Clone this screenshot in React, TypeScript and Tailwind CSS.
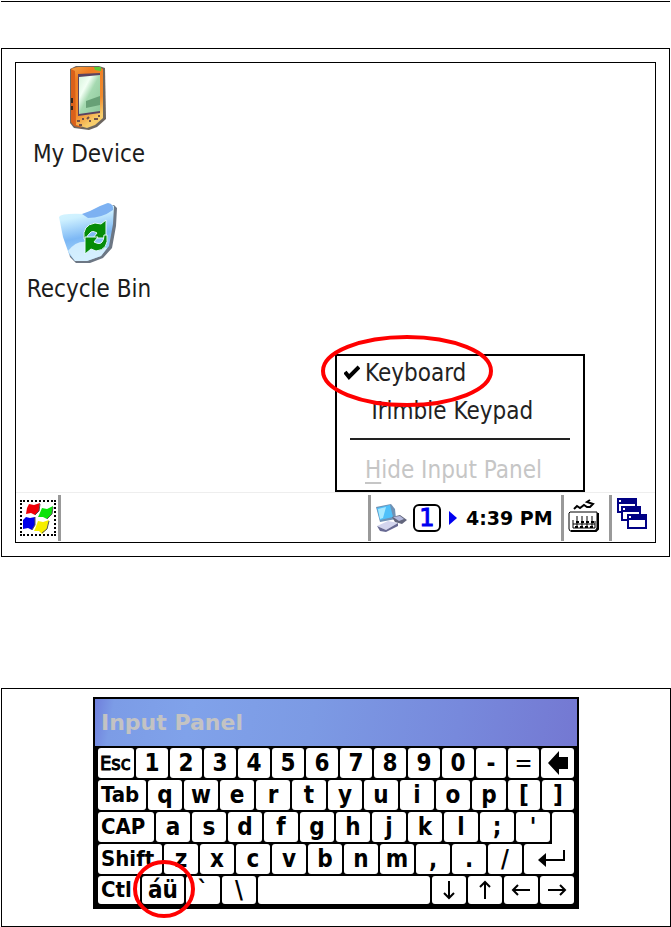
import type { ReactNode } from "react";

type Key = { label: ReactNode; name?: string; w: string; look?: string };

const W34 = "w-[34px]";
const W36 = "w-9";
const WIDE = "justify-start pl-[3px] text-[22px]";

const chars = (s: string, w: string): Key[] => [...s].map((c) => ({ label: c, w }));

function BackArrow() {
  return (
    <svg width="22" height="24" viewBox="0 0 22 24" aria-hidden="true">
      <path d="M1 12 L12 0 V6 H21 V18 H12 V24 Z" fill="#000" />
    </svg>
  );
}

function EnterArrow() {
  return (
    <svg width="28" height="20" viewBox="0 0 28 20" className="ml-1" aria-hidden="true">
      <path d="M27 1 V11 H6" fill="none" stroke="#000" strokeWidth="2" />
      <path d="M1 11 L9 4 V18 Z" fill="#000" />
    </svg>
  );
}

function Arrow({ d }: { d: string }) {
  return (
    <svg width="20" height="20" viewBox="0 0 20 20" aria-hidden="true">
      <path d={d} fill="none" stroke="#000" strokeWidth="2" />
    </svg>
  );
}

const ROWS: Key[][] = [
  [
    { label: "Esc", w: "w-[38px]", look: "justify-start pl-[2px] text-[20px] font-normal [-webkit-text-stroke:1px_#000]" },
    ...chars("1234567890", W34),
    { label: "-", w: "w-8" },
    { label: "=", w: "w-[33px]", look: "justify-center text-[24px] font-normal" },
    { label: <BackArrow />, name: "Backspace", w: "w-[35px]" },
  ],
  [
    { label: "Tab", w: "w-[50px]", look: WIDE },
    ...chars("qwertyuiop", W36),
    { label: "[", w: W34 },
    { label: "]", w: W34 },
  ],
  [{ label: "CAP", w: "w-[58px]", look: WIDE }, ...chars("asdfghjkl;'", W36)],
  [
    { label: "Shift", w: "w-[66px]", look: WIDE },
    ...chars("zxcvbnm,./", W36),
    { label: <EnterArrow />, name: "Enter", w: "w-[52px]" },
  ],
  [
    { label: "Ctl", w: "w-11", look: WIDE },
    { label: "áü", w: "w-11" },
    { label: "`", w: W36 },
    { label: "\\", w: W36 },
    { label: "", name: "Space", w: "w-[174px]" },
    { label: <Arrow d="M10 1 V18 M5 13 L10 18 L15 13" />, name: "Down", w: W36 },
    { label: <Arrow d="M10 19 V2 M5 7 L10 2 L15 7" />, name: "Up", w: W36 },
    { label: <Arrow d="M19 10 H2 M7 5 L2 10 L7 15" />, name: "Left", w: W36 },
    { label: <Arrow d="M1 10 H18 M13 5 L18 10 L13 15" />, name: "Right", w: W36 },
  ],
];

function KeyButton({ k }: { k: Key }) {
  return (
    <div className={`${k.w} shrink-0 p-px`}>
      <button
        type="button"
        aria-label={k.name}
        className={`flex h-full w-full items-center overflow-hidden whitespace-nowrap rounded-[3px] bg-white ${k.look ?? "justify-center text-[24px]"}`}
      >
        {k.label}
      </button>
    </div>
  );
}

function Keyboard() {
  return (
    <div className="border-2 border-black bg-black font-['DejaVu_Sans_Condensed','DejaVu_Sans',sans-serif] leading-6 font-bold text-black">
      <h2 className="flex h-[47px] items-center bg-[linear-gradient(100deg,#6f7fdc_0%,#7c9ce6_4%,#80a2ea_20%,#7c9ae4_45%,#7789dc_75%,#7478d2_100%)] px-[6px] font-['DejaVu_Sans',sans-serif] text-[22px] text-[#c3c3c3]">
        Input Panel
      </h2>
      <div className="px-[2px] pt-px pb-[2px]">
        {ROWS.map((row, i) => (
          <div key={i} className={i === ROWS.length - 1 ? "flex h-[30px]" : "flex h-8"}>
            {row.map((k, j) => (
              <KeyButton key={j} k={k} />
            ))}
            {i === 2 && <span className="z-10 m-px -mb-1 flex-1 rounded-t-[3px] bg-white" />}
          </div>
        ))}
      </div>
    </div>
  );
}

function DeviceIcon() {
  return (
    <svg width="38" height="66" viewBox="0 0 38 66" className="mr-[4px]" aria-hidden="true">
      <defs>
        <linearGradient id="body" x1="0" x2=".4" y1="0" y2="1">
          <stop offset="0" stopColor="#f3a548" />
          <stop offset=".25" stopColor="#ef7c22" />
          <stop offset=".75" stopColor="#f08c2e" />
          <stop offset="1" stopColor="#f8cd6a" />
        </linearGradient>
        <linearGradient id="screen" x1="0" x2="1" y1="0" y2="1">
          <stop offset="0" stopColor="#d5f3da" />
          <stop offset=".3" stopColor="#f2fff4" />
          <stop offset=".5" stopColor="#a5d9b0" />
          <stop offset="1" stopColor="#8cc79a" />
        </linearGradient>
      </defs>
      <path d="M8 1 L31 1 L37 3 L38 54 L29 62 L21 65 L6 63 L2 58 V4 Z" fill="#6c6660" />
      <path d="M3 4 L9 2 V59 L14 63 L6 61 L3 57 Z" fill="#d9601a" />
      <path d="M3 4 L10 2 L31 2 L35 4 V53 L27 60 L19 63 L8 60 L7 6 Z" fill="url(#body)" />
      <path d="M10 9 L32 8 V48 L10 51 Z" fill="#5a4260" />
      <path d="M11 12 L32 10 V46 L11 49 Z" fill="url(#screen)" />
      <path d="M18 36 L32 31 V40 L18 43 Z" fill="#67a076" />
      <path d="M26 2 H33 V6 L27 5 Z" fill="#59c936" />
      <path d="M4 33 V38 M4 41 V45" stroke="#33241c" strokeWidth="2" />
      <path d="M9 56 h3 M14 54 h2 M19 54 l2 -2 M21 56 h2 M26 54 h4 M31 50 v2 M11 60 h3" stroke="#70504a" strokeWidth="2" />
    </svg>
  );
}

function BinIcon() {
  return (
    <svg width="60" height="62" viewBox="0 0 60 62" className="mr-[2px]" aria-hidden="true">
      <defs>
        <linearGradient id="bin" x1="0" x2=".2" y1="0" y2="1">
          <stop offset="0" stopColor="#e0fbff" />
          <stop offset=".3" stopColor="#cdf0ff" />
          <stop offset=".65" stopColor="#7db8f5" />
          <stop offset="1" stopColor="#a8d6fa" />
        </linearGradient>
      </defs>
      <path d="M3 16 L30 14 L48 4 L56 3 L59 6 L58 24 L54 46 L45 56 L32 61 H18 L12 55 Z" fill="#6d7784" />
      <path d="M1 15 Q3 11 26 12 Q38 7 49 1 L56 4 L55 22 L51 44 L43 54 L29 59 L17 59 L11 52 L5 35 Z" fill="url(#bin)" />
      <path d="M24 12 Q33 9 42 4 L50 1 Q56 2 55 8 Q44 16 30 16 Z" fill="#7db1f2" />
      <path d="M10 49 Q18 38 30 40 L49 46 L43 54 L29 59 L17 59 Z" fill="#dcf3ff" opacity=".85" />
      <path d="M26 37 Q24 23 37 21 L43 22 L48 18 V36 H35 L39 31 Q34 28 32 31 Q29 33 28 38 Z" fill="#068c08" stroke="#e3f8ff" />
      <path d="M49 33 Q51 48 38 49 L33 47 L27 52 V35 H40 L36 40 Q42 43 44 40 Q46 38 46 33 Z" fill="#068c08" stroke="#e3f8ff" />
    </svg>
  );
}

function StartLogo() {
  return (
    <svg width="32" height="32" viewBox="0 0 32 32" className="shrink-0" aria-hidden="true">
      <path d="M5 6 L7 2 L12 3 L18 1 L17 9 L13 13 L9 11 L4 12 Z" fill="#f00008" />
      <path d="M17 13 L20 6 L25 7 L31 4 L30 12 L25 17 L21 15 L16 15 Z" fill="#0be20c" />
      <path d="M1 18 L4 15 L8 16 L13 15 V23 L10 28 L6 26 L1 27 Z" fill="#0000ea" />
      <path d="M13 27 L16 19 L21 20 L27 18 L25 27 L20 32 L17 29 L12 29 Z" fill="#f6ee00" />
      <path d="M18 2 L17 9 L13 13 M31 5 L30 12 L25 17 M13 15 V23 L10 28 M27 19 L25 27 L20 31" stroke="#555" fill="none" />
    </svg>
  );
}

function NetworkIcon() {
  return (
    <svg width="32" height="30" viewBox="0 0 32 30" aria-hidden="true">
      <path d="M1 4 L16 1 L20 6 L21 16 L5 19 Z" fill="#6f92b5" />
      <path d="M2 5 L15 2 L18 14 L5 17 Z" fill="#4fc0fa" />
      <path d="M3 6 L11 4 L8 15 L5 16 Z" fill="#a8e9ff" />
      <path d="M2 23 L13 18 L23 20 L11 27 Z" fill="#d3d5ee" />
      <path d="M2 23 L11 27 L23 20 V23 L11 29 L5 28 Z" fill="#686a93" />
      <path d="M17 14 L25 12 L32 17 L27 21 L20 19 Z" fill="#62657c" />
      <path d="M18 14 L25 13 L29 16 L24 18 Z" fill="#b4b9dc" />
    </svg>
  );
}

function KeyboardIcon() {
  return (
    <svg width="34" height="34" viewBox="0 0 34 34" fill="none" stroke="#000" aria-hidden="true">
      <path d="M7 10 L10 7 L13 9 L17 6 L20 8 H23 L26 5 L20 3 L23 1" strokeWidth="2" />
      <path d="M3 13 H30 V29 L28 32 H3 L2 30 V14 Z" />
      <path d="M31 14 V30 L29 32 H4" strokeWidth="2" />
      <path d="M6 21 V29 H28 V22 M6 25 H28 M10 17 V28 M15 17 V28 M20 17 V28 M25 17 V28" />
      <path d="M9 23 h3 M14 23 h3 M19 23 h3 M24 23 h3 M8 28 h3 M13 28 h3 M18 28 h3 M23 28 h3" strokeWidth="2" />
    </svg>
  );
}

function WindowsIcon() {
  return (
    <svg width="30" height="31" viewBox="0 0 30 31" aria-hidden="true">
      {["translate(0 0)", "translate(4 8)", "translate(10 16)"].map((t) => (
        <g key={t} transform={t}>
          <rect x="1" y="1" width="18" height="13" fill="#fff" stroke="#000084" strokeWidth="2" />
          <path d="M0 0 H20 V6 H0 Z" fill="#000084" />
          <path d="M2 3 h2" stroke="#fff" strokeWidth="2" />
        </g>
      ))}
    </svg>
  );
}

function Taskbar() {
  return (
    <footer className="flex h-[50px] items-center border-t border-[#eee] bg-white">
      <button type="button" aria-label="Start" className="ml-1 flex size-9 items-center justify-center border-2 border-dotted border-black">
        <StartLogo />
      </button>
      <span className="ml-[2px] h-[46px] w-[3px] bg-[#999]" />
      <span className="ml-auto h-[46px] w-[3px] bg-[#999]" />
      <span className="ml-1">
        <NetworkIcon />
      </span>
      <button type="button" className="ml-[6px] flex size-7 items-center justify-center rounded-md border-2 border-black font-['DejaVu_Sans',sans-serif] text-[24px] leading-6 text-[#0000f0] [-webkit-text-stroke:1px_#0000f0]">
        1
      </button>
      <svg width="8" height="14" viewBox="0 0 8 14" className="ml-2" aria-hidden="true">
        <path d="M0 0 L8 7 L0 14 Z" fill="#0000f0" />
      </svg>
      <time className="ml-[9px] w-[87px] whitespace-nowrap font-['DejaVu_Sans',sans-serif] text-[19px] leading-6 font-bold text-black">4:39 PM</time>
      <span className="ml-2 h-[46px] w-[3px] bg-[#999]" />
      <button type="button" aria-label="Input panel" className="mb-1 ml-[3px]">
        <KeyboardIcon />
      </button>
      <span className="ml-2 h-[46px] w-[3px] bg-[#999]" />
      <button type="button" aria-label="Show windows" className="mr-2 mb-2 ml-[5px]">
        <WindowsIcon />
      </button>
    </footer>
  );
}

function InputMenu() {
  return (
    <div role="menu" className="absolute right-[70px] bottom-[50px] w-[250px] border-2 border-black bg-white pt-px pb-[4px] text-[24px] leading-8 text-[#222]">
      <button type="button" role="menuitemradio" aria-checked="true" className="flex h-8 w-full items-center pl-[7px]">
        <svg width="16" height="20" viewBox="0 0 16 20" className="mr-[5px]" aria-hidden="true">
          <path d="M1 9 L5 14 L15 4" fill="none" stroke="#000" strokeWidth="4" />
        </svg>
        Keyboard
      </button>
      <button type="button" role="menuitemradio" aria-checked="false" className="mt-[6px] flex h-8 w-full items-center pl-[31px]">
        Trimble Keypad
      </button>
      <hr className="mx-[13px] mt-[11px] border-t-2 border-[#222]" />
      <button type="button" role="menuitem" disabled className="mt-[14px] flex h-8 w-full items-center pl-[28px] text-[#c6c6c6]">
        <span className="whitespace-pre"><u className="decoration-2 underline-offset-4">H</u>ide Input Panel</span>
      </button>
      <svg width="174" height="74" viewBox="0 0 174 74" className="absolute -top-[22px] -left-[17px]" aria-hidden="true">
        <ellipse cx="87" cy="37" rx="84" ry="34" fill="none" stroke="#f00" strokeWidth="4" />
      </svg>
    </div>
  );
}

export default function App() {
  return (
    <main className="bg-white pt-px pl-px font-['DejaVu_Sans_Condensed','DejaVu_Sans',sans-serif]">
      <hr className="mr-px border-t border-black" />
      <section className="mt-[46px] mr-px border border-black p-[13px]">
        <div className="relative border border-black">
          <div className="flex h-[429px] flex-col items-start pt-[2px] text-[24px] leading-8 text-[#1c1c1c]">
            <button type="button" className="flex w-[146px] flex-col items-center">
              <DeviceIcon />
              <span className="mt-[7px]">My Device</span>
            </button>
            <button type="button" className="mt-8 flex w-[146px] flex-col items-center">
              <BinIcon />
              <span className="mt-[9px] whitespace-nowrap">Recycle Bin</span>
            </button>
          </div>
          <Taskbar />
          <InputMenu />
        </div>
      </section>
      <section className="mt-[131px] border border-black px-2 pt-2 pb-[17px]">
        <div className="relative mx-auto w-[486px]">
          <Keyboard />
          <svg width="64" height="62" viewBox="0 0 64 62" className="absolute top-[162px] left-[39px]" aria-hidden="true">
            <ellipse cx="32" cy="30" rx="29" ry="27" fill="none" stroke="#f00" strokeWidth="4" />
          </svg>
        </div>
      </section>
    </main>
  );
}
